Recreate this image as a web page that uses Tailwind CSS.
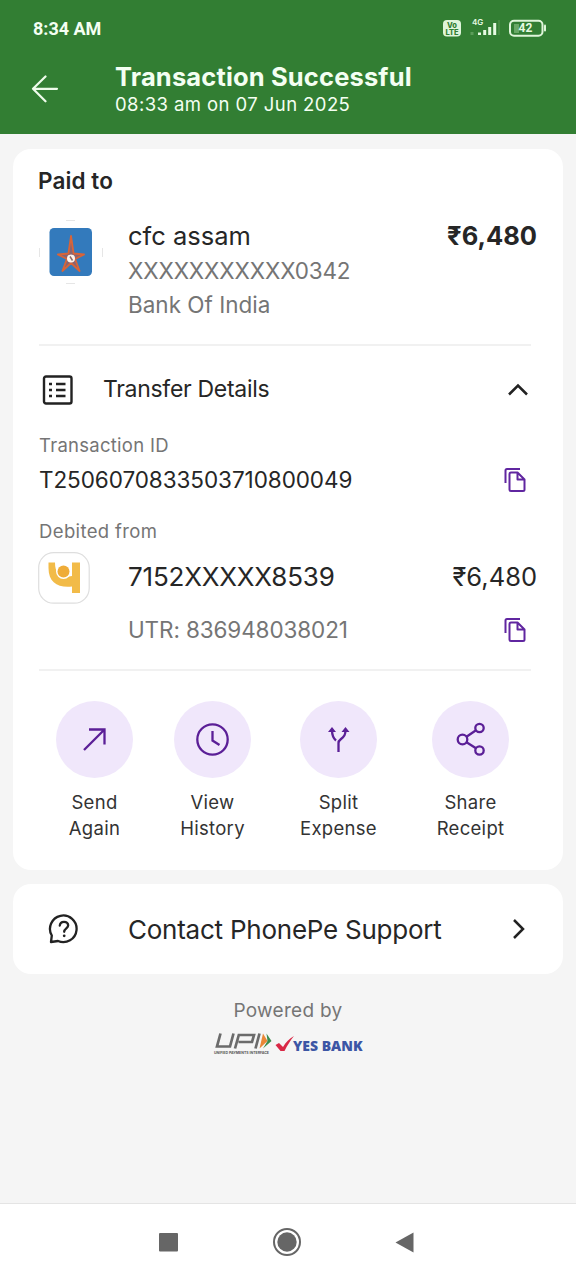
<!DOCTYPE html>
<html lang="en">
<head>
<meta charset="utf-8">
<title>Transaction Successful</title>
<script src="https://cdn.jsdelivr.net/npm/@tailwindcss/browser@4"></script>
</head>
<body class="w-[576px] h-[1280px] overflow-hidden bg-[#f5f5f5] font-['Inter','Noto_Sans',sans-serif] text-[#262626] whitespace-nowrap flex flex-col">

<header class="h-[134px] bg-[#327e33] text-[#f4fff2] shrink-0">
  <div class="h-[56px] pl-[33px] pr-[29px] flex items-center justify-between">
    <span class="text-[18px] font-bold font-['Roboto',sans-serif]">8:34 AM</span>
    <svg class="w-[104px] h-[24px]" viewBox="0 0 104 24" fill="none">
      <rect x="0" y="4" width="18" height="16.5" rx="4" fill="#dff5da"/>
      <text x="9" y="11.700" text-anchor="middle" font-family="Inter" font-size="7.500" font-weight="800" fill="#327e33">Vo</text>
      <text x="9" y="19" text-anchor="middle" font-family="Inter" font-size="7.500" font-weight="800" textLength="13" fill="#327e33">LTE</text>
      <text x="29" y="8.500" font-family="Inter" font-size="8" font-weight="600" fill="#e6fae2">4G</text>
      <path d="M29 19v-3" stroke="#5c9d5a" stroke-width="3"/>
      <path d="M36.500 19v-2.500M41.700 19v-5M46.700 19v-8M51.700 19v-12" stroke="#e6fae2" stroke-width="3"/>
      <path d="M56 19V4" stroke="#4b9049" stroke-width="1.500"/>
      <rect x="67" y="4.800" width="32.500" height="15" rx="4" stroke="#dff5da" stroke-width="2"/>
      <path d="M71 8h5v9h-5z" fill="#69a866"/>
      <path d="M102 9.500v5" stroke="#dff5da" stroke-width="2" stroke-linecap="round"/>
      <text x="75.500" y="16.300" font-family="Roboto" font-size="12" font-weight="700" textLength="14" fill="#e6fae2">42</text>
    </svg>
  </div>
  <div class="h-[78px] pl-[31px] flex">
    <svg class="w-[28px] h-[28px] mt-[19px]" viewBox="0 0 28 28" fill="none" stroke="#effcec" stroke-width="2.200" stroke-linecap="round" stroke-linejoin="round"><path d="M26 13.800H2M14.500 1.500L2 13.800l12.500 12.500"/></svg>
    <div class="ml-[56px] mt-[6px]">
      <div class="h-[30px] leading-[30px] text-[25.500px] tracking-[0.15px] font-bold">Transaction Successful</div>
      <div class="h-[25px] leading-[25px] text-[18.500px] tracking-[0.42px]">08:33 am on 07 Jun 2025</div>
    </div>
  </div>
</header>

<main class="flex-1 px-[13px] pt-[15px]">
  <section class="h-[721px] bg-white rounded-[18px] px-[26px] pt-[17px]">
    <h2 class="h-[30px] leading-[30px] text-[22.500px] ml-[-1px] tracking-[0.1px] font-semibold">Paid to</h2>
    <div class="h-[150px] flex border-b-2 border-[#f1f1f1] mr-[6px] pt-[24px]">
      <svg class="w-[64px] h-[64px] shrink-0" viewBox="0 0 64 64" fill="none">
        <path d="M27 .5h9M27 63.500h9M.5 28v9M63.500 28v9" stroke="#e6e6e6"/>
        <rect x="10.500" y="8" width="42.500" height="48" rx="4.500" fill="#337abc"/>
        <path d="M32 16l2.600 17.500 10.500 1-9 4.500 4.500 12-8.600-8-8.600 8 4.500-12-9-4.500 10.500-1z" fill="#8a6470" stroke="#d86438" stroke-width="1.800" stroke-linejoin="round"/>
        <circle cx="32" cy="38.500" r="4" fill="#fff4ec"/><path d="M31 36.500l2.500 4" stroke="#8a6a68" stroke-width="1.500"/>
      </svg>
      <div class="ml-[25px] flex-1">
        <div class="h-[32px] leading-[32px] text-[25.500px]">cfc assam</div>
        <div class="h-[37px] leading-[38px] text-[22.500px] tracking-[-0.13px] text-[#757575]">XXXXXXXXXXX0342</div>
        <div class="h-[32px] leading-[32px] text-[22.500px] text-[#757575]">Bank Of India</div>
      </div>
      <div class="h-[32px] leading-[32px] text-[25.500px] font-bold mr-[-6px]">₹6,480</div>
    </div>
    <div class="h-[85px] flex items-center pt-[2px] pr-[8px]">
      <svg class="w-[32px] h-[32px] ml-[3px]" viewBox="0 0 32 32" fill="none" stroke="#222"><rect x="2" y="2.500" width="27.500" height="27" rx="2" stroke-width="2.400"/><path d="M7 10h3M7 16h3M7 22h3M14 10h9.500M14 16h9.500M14 22h9.500" stroke-width="2.400"/></svg>
      <span class="ml-[29px] flex-1 text-[23px] tracking-[-0.3px]">Transfer Details</span>
      <svg class="w-[22px] h-[14px]" viewBox="0 0 22 14" fill="none" stroke="#222" stroke-width="2.500"><path d="M2 11.500l9-9 9 9"/></svg>
    </div>
    <div class="h-[28px] leading-[28px] text-[18.500px] tracking-[0.27px] text-[#757575]">Transaction ID</div>
    <div class="h-[41px] flex items-center justify-between pr-[10px]">
      <span class="text-[22.500px] tracking-[-0.07px]">T2506070833503710800049</span>
      <svg class="w-[24px] h-[26px]" viewBox="0 0 24 26" fill="none" stroke="#6026a0" stroke-width="2" stroke-linejoin="round"><path d="M2.500 16V3.500q0-1.500 1.500-1.500h13"/><path d="M8 5.500h6.500l7 7v10q0 1.500-1.500 1.500H8q-1.500 0-1.500-1.500v-15.500q0-1.500 1.500-1.500zM14.500 5.500v7h7"/></svg>
    </div>
    <div class="h-[53px] pt-[17px] leading-[28px] text-[18.500px] tracking-[0.37px] text-[#757575]">Debited from</div>
    <div class="h-[50px] flex items-center">
      <svg class="w-[52px] h-[52px] ml-[-1px]" viewBox="0 0 52 52"><rect x=".7" y=".7" width="50.500" height="50.500" rx="15" fill="#fff" stroke="#dedede" stroke-width="1.200"/><path d="M10.500 10.500h6.500c0 12 6 16 17 13.500V10.500h8v30.500h-8v-6.500c-14 1.500-23.500-4-23.500-18.500z" fill="#f2bb48"/><circle cx="25.500" cy="19.500" r="7.500" fill="#fff"/><circle cx="25.500" cy="19.500" r="6" fill="#efac38"/></svg>
      <span class="ml-[38px] flex-1 text-[26px] tracking-[-0.2px] mt-[-3px]">7152XXXXX8539</span>
      <span class="text-[25.500px] mt-[-2px]">₹6,480</span>
    </div>
    <div class="h-[68px] pt-[10px] pl-[89px] mr-[6px] pr-[4px] border-b-2 border-[#f1f1f1]">
      <div class="h-[36px] flex items-center justify-between mt-[-1px]"><span class="text-[22.500px] tracking-[-0.12px] text-[#757575]">UTR: 836948038021</span>
      <svg class="w-[24px] h-[26px]" viewBox="0 0 24 26" fill="none" stroke="#6026a0" stroke-width="2" stroke-linejoin="round"><path d="M2.500 16V3.500q0-1.500 1.500-1.500h13"/><path d="M8 5.500h6.500l7 7v10q0 1.500-1.500 1.500H8q-1.500 0-1.500-1.500v-15.500q0-1.500 1.500-1.500zM14.500 5.500v7h7"/></svg></div>
    </div>
    <div class="flex pt-[30px] ml-[17px] text-center text-[18.500px] tracking-[0.3px] leading-[26px] text-[#333]">
      <div class="w-[77px] flex flex-col items-center">
        <svg class="w-[77px] h-[77px] mb-[11px]" viewBox="0 0 77 77" fill="none" stroke="#5b1f97" stroke-width="2.300"><circle cx="38.500" cy="38.500" r="38.500" fill="#f0e7fb" stroke="none"/><path d="M28 49l20-20M33 28.500h15.500v15"/></svg>
        <div>Send</div><div>Again</div>
      </div>
      <div class="w-[77px] ml-[41px] flex flex-col items-center">
        <svg class="w-[77px] h-[77px] mb-[11px]" viewBox="0 0 77 77" fill="none" stroke="#5b1f97" stroke-width="2.300"><circle cx="38.500" cy="38.500" r="38.500" fill="#f0e7fb" stroke="none"/><circle cx="38.500" cy="38.500" r="15.200"/><path d="M38.500 30v9.500l7 4.500"/></svg>
        <div>View</div><div>History</div>
      </div>
      <div class="w-[77px] ml-[49px] flex flex-col items-center">
        <svg class="w-[77px] h-[77px] mb-[11px]" viewBox="0 0 77 77" fill="none" stroke="#5b1f97" stroke-width="2.300"><circle cx="38.500" cy="38.500" r="38.500" fill="#f0e7fb" stroke="none"/><path d="M38.500 51v-9q0-2 2-3.500c4-3 5-5 5-10M32 29c0 5 1 8 4 10.500"/><path d="M32 26l-4 5h8zM45.500 26l-4 5h8z" fill="#5b1f97" stroke="none"/></svg>
        <div>Split</div><div>Expense</div>
      </div>
      <div class="w-[77px] ml-[55px] flex flex-col items-center">
        <svg class="w-[77px] h-[77px] mb-[11px]" viewBox="0 0 77 77" fill="none" stroke="#5b1f97" stroke-width="2.300"><circle cx="38.500" cy="38.500" r="38.500" fill="#f0e7fb" stroke="none"/><circle cx="30.500" cy="38.500" r="4.800"/><circle cx="47.500" cy="27" r="4.200"/><circle cx="47.500" cy="49.500" r="4.200"/><path d="M34.500 35.800l9.500-6.500M34.500 41.200l9.500 6"/></svg>
        <div>Share</div><div>Receipt</div>
      </div>
    </div>
  </section>

  <section class="h-[90px] mt-[14px] bg-white rounded-[18px] pl-[35px] pr-[37px] flex items-center">
    <svg class="w-[32px] h-[32px]" viewBox="0 0 32 32" fill="none" stroke="#222" stroke-width="2.300" stroke-linejoin="round"><path d="M3 29l.8-6.500A13.300 13.300 0 1 1 10 28z"/><path d="M11.800 12.500q.3-3.700 4.200-3.700t4.200 3.500c0 3-4 3-4 6.500" stroke-linecap="round"/><circle cx="16.200" cy="22.800" r=".7" stroke-width="1.400"/></svg>
    <span class="ml-[48px] flex-1 text-[26px] tracking-[-0.24px]">Contact PhonePe Support</span>
    <svg class="w-[14px] h-[22px]" viewBox="0 0 14 22" fill="none" stroke="#222" stroke-width="2.500"><path d="M2 2l9 9-9 9"/></svg>
  </section>

  <footer class="flex flex-col items-center pt-[23px]">
    <div class="h-[28px] leading-[28px] text-[19px] tracking-[0.3px] text-[#757575]">Powered by</div>
    <svg class="w-[150px] h-[26px] mt-[6px]" viewBox="0 0 150 26" fill="none">
      <path d="M7.500 2.500L4 15.500h13L20.500 2.500M22 17.500L25.800 4H41l-2 7H25.500M46.500 2.500L42.500 17.500" stroke="#6b6b6b" stroke-width="2.700"/>
      <path d="M50 2.500l4.500 7.500L46.500 17.500z" fill="#e98736"/><path d="M53.500 2.500l5 7.500L50 17.500l4.500-7.500z" fill="#3b8c4c"/>
      <text x="1" y="23" font-family="Inter" font-size="3.800" font-weight="700" textLength="55" lengthAdjust="spacingAndGlyphs" fill="#555">UNIFIED PAYMENTS INTERFACE</text>
      <path d="M62.500 14l3.500-2 4 4C73 11 76 8 81 5 77 10 74.500 14 71.500 20h-4z" fill="#d92846"/>
      <text x="80" y="19.500" font-family="Open Sans" font-size="14" font-weight="800" textLength="69.500" lengthAdjust="spacingAndGlyphs" fill="#3c56a5">YES BANK</text>
    </svg>
  </footer>
</main>

<nav class="h-[77px] bg-white border-t border-[#e4e4e4] flex items-center shrink-0">
  <svg class="w-[19px] h-[19px] ml-[159px]" viewBox="0 0 19 19"><rect width="19" height="18.500" rx="1" fill="#666"/></svg>
  <svg class="w-[28px] h-[28px] ml-[95px]" viewBox="0 0 28 28"><circle cx="14" cy="14" r="13" fill="none" stroke="#666" stroke-width="2"/><circle cx="14" cy="14" r="9.700" fill="#666"/></svg>
  <svg class="w-[19px] h-[21px] ml-[94px]" viewBox="0 0 19 21"><path d="M18.500 .5v20L.5 10.500z" fill="#666"/></svg>
</nav>
</body>
</html>
